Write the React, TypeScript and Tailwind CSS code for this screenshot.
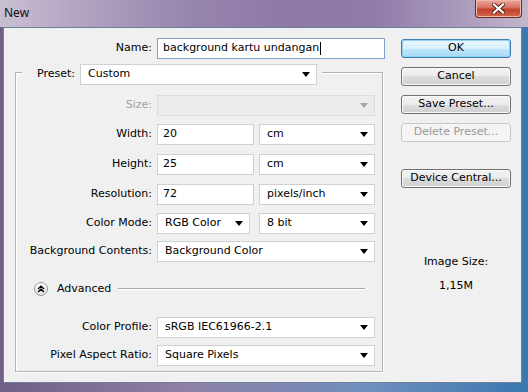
import React from "react";

const Tri = ({ color = "#000" }: { color?: string }) => (
  <svg width="8" height="5" viewBox="0 0 8 5" className="shrink-0">
    <polygon points="0,0 8,0 4,5" fill={color} />
  </svg>
);

const Select = ({ text, w, disabled = false }: { text: string; w: string; disabled?: boolean }) => (
  <div
    className={`${w} h-[21px] flex items-center justify-between pl-[7px] pr-[6px] border ${
      disabled ? "bg-[#ececec] border-[#dcdcdc]" : "bg-white border-[#d0d0d0]"
    }`}
  >
    <span className="whitespace-nowrap">{text}</span>
    <Tri color={disabled ? "#a8a8a8" : "#000"} />
  </div>
);

const Input = ({ text, w }: { text: string; w: string }) => (
  <div className={`${w} h-[21px] flex items-center pl-[5px] bg-white border border-[#d0d0d0]`}>
    <span>{text}</span>
  </div>
);

const Row = ({ label, mt, children, dim = false }: { label: string; mt: string; children: React.ReactNode; dim?: boolean }) => (
  <div className={`flex items-center gap-[5px] ${mt}`}>
    <div className={`w-[136px] text-right whitespace-nowrap ${dim ? "text-[#a0a0a0]" : ""}`}>{label}</div>
    {children}
  </div>
);

const Btn = ({ text, mt, kind = "normal" }: { text: string; mt: string; kind?: "normal" | "default" | "disabled" }) => {
  const cls =
    kind === "default"
      ? "border-[#3c7fb1] bg-[linear-gradient(#eaf6fd_0%,#d9f0fc_50%,#bee6fd_50%,#a7d9f5_100%)] shadow-[inset_0_0_0_1px_#8fd1f3]"
      : kind === "disabled"
      ? "border-[#c4c7c9] bg-[#f4f4f4] text-[#9a9a9a]"
      : "border-[#707070] bg-[linear-gradient(#f2f2f2_0%,#ebebeb_50%,#dddddd_50%,#cfcfcf_100%)] shadow-[inset_0_0_0_1px_#fafafa]";
  return (
    <div className={`${mt} w-[110px] h-[19px] rounded-[3px] border flex items-center justify-center whitespace-nowrap ${cls}`}>
      {text}
    </div>
  );
};

export default function App() {
  return (
    <div className="w-[528px] h-[392px] relative overflow-hidden flex flex-col font-['DejaVu_Sans',sans-serif] text-[11px] text-black bg-[linear-gradient(90deg,#6f5f86_0%,#8e7fa6_35%,#6f8fbd_70%,#3a77b0_100%)]">
      <div className="h-[27px] shrink-0 flex items-center pl-[4px] pb-[1px] bg-[linear-gradient(90deg,#c9bfd2_0%,#b2a4c2_15%,#9786ae_35%,#8d78a6_55%,#8f7ba8_70%,#ab9bbd_88%,#c2b6cc_100%)]">
        <span className="text-[12px] font-['Noto_Sans',sans-serif] text-[#111]">New</span>
      </div>
      <div className="absolute top-0 right-[6px] w-[47px] h-[18px] rounded-b-[4px] border border-t-0 border-[#6b2a22] bg-[linear-gradient(#e9a99c_0%,#d7705f_45%,#c4412c_55%,#d2654c_100%)] flex items-center justify-center shadow-[inset_0_0_0_1px_#f0b8a8]">
        <svg width="13" height="11" viewBox="0 0 13 11">
          <path d="M2 1.5 L11 9.5 M11 1.5 L2 9.5" stroke="#5a2018" strokeWidth="4" strokeLinecap="square" />
          <path d="M2 1.5 L11 9.5 M11 1.5 L2 9.5" stroke="#ffffff" strokeWidth="2.2" strokeLinecap="square" />
        </svg>
      </div>

      <div className="ml-[3px] mr-[6px] h-[356px] shrink-0 bg-[#f0f0f0] border border-[#6d7f99] flex">
        {/* left column */}
        <div className="w-[397px] flex flex-col">
          <div className="mt-[10px] flex items-center gap-[5px]">
            <div className="w-[148px] text-right">Name:</div>
            <div className="w-[228px] h-[21px] flex items-center pl-[5px] bg-white border border-[#7da2ce]">
              <span>background kartu undangan</span>
              <span className="w-[1px] h-[13px] bg-black ml-[1px]" />
            </div>
          </div>

          <div className="mt-[13px] ml-[11px] w-[368px] h-[300px] border border-[#b4b4b4] shadow-[inset_1px_1px_0_#ffffff,1px_1px_0_#ffffff] flex flex-col">
            <div className="-mt-[9px] ml-[6px] w-fit flex items-center gap-[5px] pr-[5px] bg-[#f0f0f0]">
              <div className="w-[53px] text-right">Preset:</div>
              <Select text="Custom" w="w-[237px]" />
            </div>

            <Row label="Size:" mt="mt-[10px]" dim>
              <Select text="" w="w-[218px]" disabled />
            </Row>
            <Row label="Width:" mt="mt-[8px]">
              <Input text="20" w="w-[97px]" />
              <Select text="cm" w="w-[116px]" />
            </Row>
            <Row label="Height:" mt="mt-[9px]">
              <Input text="25" w="w-[97px]" />
              <Select text="cm" w="w-[116px]" />
            </Row>
            <Row label="Resolution:" mt="mt-[9px]">
              <Input text="72" w="w-[97px]" />
              <Select text="pixels/inch" w="w-[116px]" />
            </Row>
            <Row label="Color Mode:" mt="mt-[8px]">
              <Select text="RGB Color" w="w-[93px]" />
              <div className="ml-[4px]">
                <Select text="8 bit" w="w-[116px]" />
              </div>
            </Row>
            <Row label="Background Contents:" mt="mt-[7px]">
              <Select text="Background Color" w="w-[218px]" />
            </Row>

            <div className="mt-[19px] h-[16px] flex items-center">
              <div className="ml-[18px] w-[14px] h-[14px] rounded-full border border-[#9a9a9a] bg-[linear-gradient(#ffffff,#e4e4e4)] flex items-center justify-center">
                <svg width="8" height="8" viewBox="0 0 8 8">
                  <path d="M1 4 L4 1.3 L7 4 M1 7 L4 4.3 L7 7" fill="none" stroke="#000" strokeWidth="1.4" />
                </svg>
              </div>
              <span className="ml-[9px]">Advanced</span>
              <div className="ml-[7px] w-[247px] h-[2px] border-t border-[#a8a8a8] border-b border-b-white" />
            </div>

            <Row label="Color Profile:" mt="mt-[20px]">
              <Select text="sRGB IEC61966-2.1" w="w-[218px]" />
            </Row>
            <Row label="Pixel Aspect Ratio:" mt="mt-[7px]">
              <Select text="Square Pixels" w="w-[218px]" />
            </Row>
          </div>
        </div>

        {/* right column */}
        <div className="w-[110px] flex flex-col items-center">
          <Btn text="OK" mt="mt-[11px]" kind="default" />
          <Btn text="Cancel" mt="mt-[9px]" />
          <Btn text="Save Preset..." mt="mt-[9px]" />
          <Btn text="Delete Preset..." mt="mt-[9px]" kind="disabled" />
          <Btn text="Device Central..." mt="mt-[27px]" />
          <div className="mt-[67px] h-[14px] leading-[14px] text-center whitespace-nowrap">Image Size:</div>
          <div className="mt-[10px] h-[14px] leading-[14px] text-center">1,15M</div>
        </div>
      </div>
    </div>
  );
}
